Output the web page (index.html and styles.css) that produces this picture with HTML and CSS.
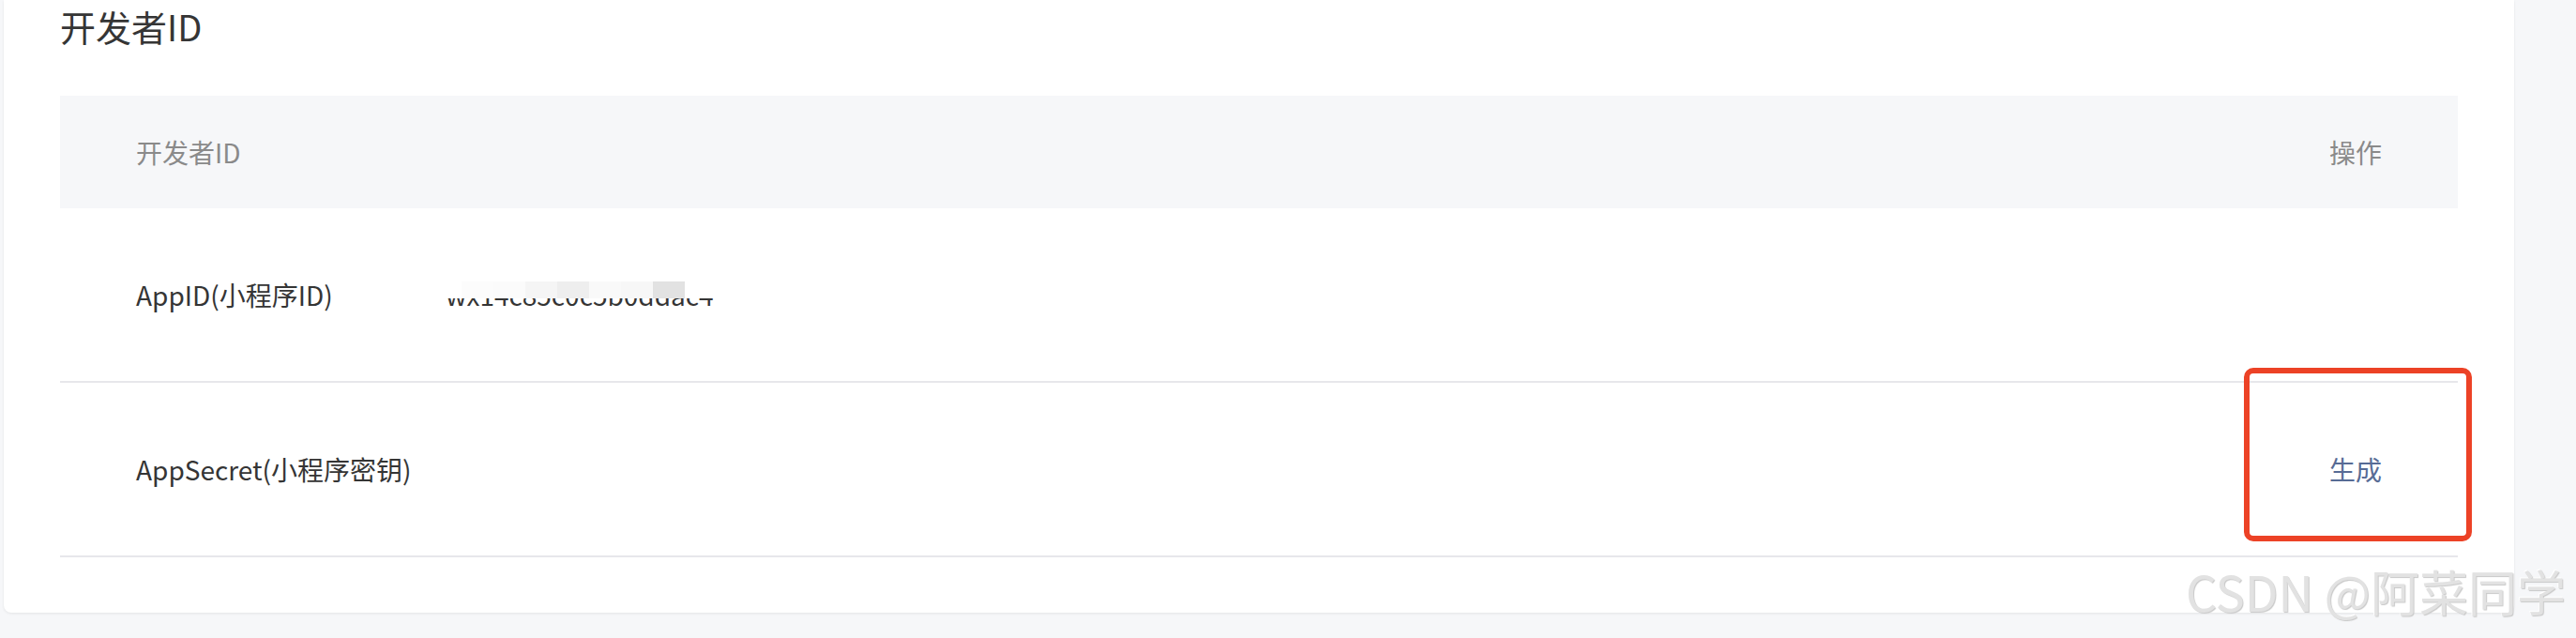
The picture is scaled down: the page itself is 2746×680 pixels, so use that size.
FILE: index.html
```html
<!DOCTYPE html>
<html lang="zh-CN">
<head>
  <meta charset="UTF-8">
  <title>开发者ID</title>
  <link rel="stylesheet" href="styles.css">
</head>
<body>
  <div class="card">
    <h2 class="title">开发者ID</h2>
    <div class="table">
      <div class="row head">
        <div class="col-label">开发者ID</div>
        <div class="col-value"></div>
        <div class="col-action">操作</div>
      </div>
      <div class="row">
        <div class="col-label">AppID(小程序ID)</div>
        <div class="col-value">
          <span class="secret">wx14c85c0c5b0ddac4
            <span class="mask">
              <i class="m1"></i><i class="m2"></i><i class="m3"></i><i class="m4"></i><i class="m5"></i><i class="m6"></i><i class="m7"></i>
            </span>
          </span>
        </div>
        <div class="col-action"></div>
      </div>
      <div class="row">
        <div class="col-label">AppSecret(小程序密钥)</div>
        <div class="col-value"></div>
        <div class="col-action"><a class="link" href="#">生成</a></div>
        <div class="highlight"></div>
      </div>
    </div>
  </div>
  <div class="watermark">CSDN @阿菜同学</div>
</body>
</html>
```

FILE: styles.css
```css
body {
  margin: 0;
  height: 680px;
  background-color: #f6f7f9;
  font-family: "Noto Sans CJK SC", sans-serif;
  color: #353535;
  overflow: hidden;
  position: relative;
}

.card {
  margin-left: 4px;
  width: 2676px;
  height: 653px;
  background-color: #fff;
  border-radius: 0 0 8px 8px;
  box-shadow: 0 1px 3px rgba(0, 0, 0, 0.08);
  box-sizing: border-box;
  padding: 5px 0 0 60px;
}

.title {
  margin: 0;
  font-size: 38px;
  font-weight: normal;
  line-height: 46px;
  color: #353535;
}

.table {
  margin-top: 51px;
  width: 2556px;
}

.row {
  position: relative;
  display: flex;
  align-items: center;
  height: 184px;
  padding: 0 81px;
  border-bottom: 2px solid #e7e7eb;
  font-size: 28px;
}

.row.head {
  height: 120px;
  border-bottom: none;
  background-color: #f6f7f9;
  color: #8a8a8a;
}

.col-label {
  width: 330px;
}

.col-value {
  flex: 1;
}

.col-action {
  text-align: right;
}

.secret {
  position: relative;
  display: inline-block;
  line-height: 40px;
}

.mask {
  position: absolute;
  left: -6px;
  right: -6px;
  top: 0;
  height: 24px;
  background-color: #fff;
  display: flex;
  padding-left: 23px;
  padding-top: 6px;
  box-sizing: border-box;
}

.mask i {
  width: 34px;
  height: 18px;
}

.m1 { background-color: #fcfcfc; }
.m2 { background-color: #fbfbfb; }
.m3 { background-color: #f5f5f5; }
.m4 { background-color: #eeeeee; }
.m5 { background-color: #f9f9f9; }
.m6 { background-color: #f7f7f7; }
.m7 { background-color: #e2e2e2; }

.link {
  color: #576b95;
  text-decoration: none;
}

.highlight {
  position: absolute;
  top: -16px;
  right: -15px;
  width: 243px;
  height: 185px;
  border: 6px solid #ec4226;
  border-radius: 10px;
  box-sizing: border-box;
}

.watermark {
  position: absolute;
  left: 2330px;
  top: 598px;
  font-size: 52px;
  line-height: 64px;
  color: #e2e2e2;
  white-space: nowrap;
  text-shadow: 1px 1px 1px #c8c8c8, -1px -1px 0 #fff;
}
```
